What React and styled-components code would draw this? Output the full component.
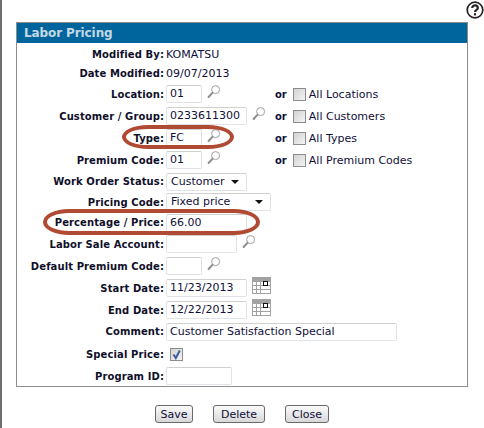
import React from 'react'
import styled, { createGlobalStyle } from 'styled-components'

const GlobalStyle = createGlobalStyle`
  html, body {
    margin: 0;
    padding: 0;
    background: #fff;
  }
`
const Page = styled.div`
  position: relative;
  width: 484px;
  height: 428px;
  box-sizing: border-box;
  border-left: 2px solid #6e6e6e;
  padding: 22px 0 0 14px;
  overflow: hidden;
  font-family: 'DejaVu Sans', Verdana, sans-serif;
  font-size: 11px;
  color: #10103a;
`
const HelpButton = styled.svg`
  position: absolute;
  left: 464px;
  top: 1px;
`
const Panel = styled.div`
  width: 452px;
  height: 365px;
  box-sizing: border-box;
  border: 1px solid #8c8c8c;
`
const Header = styled.div`
  height: 20px;
  background: #00659c;
  color: #c4d8e6;
  font-size: 12px;
  font-weight: bold;
  letter-spacing: -0.1px;
  line-height: 20px;
  padding-left: 7px;
`
const Rows = styled.div`
  padding-top: 1px;
`
const Row = styled.div`
  display: grid;
  grid-template-columns: 147px 111px auto;
  align-items: center;
  height: ${props => props.$height}px;
`
const Label = styled.div`
  font-size: 10px;
  font-weight: bold;
  letter-spacing: 0.1px;
  text-align: right;
  color: #10102a;
  white-space: nowrap;
`
const Field = styled.div`
  display: flex;
  align-items: center;
  gap: 5px;
  padding-left: 2px;
  white-space: nowrap;
`
const Input = styled.div`
  box-sizing: border-box;
  flex: none;
  width: ${props => props.$width}px;
  height: 18px;
  line-height: 16px;
  padding-left: 3px;
  background: #fff;
  border: 1px solid #dfe3e8;
  border-top-color: #d0d0d0;
  border-radius: 2px;
  overflow: hidden;
`
const Select = styled(Input)`
  display: flex;
  align-items: center;
  justify-content: space-between;
  padding: 0 7px 0 4px;
`
const Caret = styled.span`
  width: 0;
  height: 0;
  border-left: 4px solid transparent;
  border-right: 4px solid transparent;
  border-top: 4px solid #111;
`
const OrPart = styled.div`
  display: flex;
  align-items: center;
  white-space: nowrap;
`
const Or = styled.span`
  font-size: 10px;
  font-weight: bold;
  margin-right: 6px;
`
const Check = styled.span`
  box-sizing: border-box;
  display: flex;
  align-items: center;
  justify-content: center;
  width: 13px;
  height: 13px;
  flex: none;
  margin-right: ${props => props.$margin || 0}px;
  margin-left: ${props => props.$left || 0}px;
  border: 1px solid #8d8d8d;
  background: linear-gradient(135deg, #d2d2d2, #f4f4f4);
`
const Buttons = styled.div`
  display: flex;
  gap: 20px;
  margin: 18px 0 0 139px;
`
const Button = styled.button`
  box-sizing: border-box;
  width: ${props => props.$width}px;
  height: 18px;
  padding: 0;
  font-family: inherit;
  font-size: 11px;
  color: #10103a;
  background: linear-gradient(#fafafa, #d8d8d8);
  border: 1px solid #6a6a6a;
  border-radius: 3px;
`
const Oval = styled.div`
  position: absolute;
  box-sizing: border-box;
  left: ${props => props.$left}px;
  top: ${props => props.$top}px;
  width: ${props => props.$width}px;
  height: ${props => props.$height}px;
  border: 4px solid #b04a33;
  border-radius: 26px / 50%;
`
const SearchSvg = styled.svg`
  margin-bottom: 4px;
`
const CalendarSvg = styled.svg`
  margin-bottom: 5px;
`

const SearchIcon = () => (
  <SearchSvg width="14" height="14" viewBox="0 0 14 14">
    <circle cx="8.6" cy="4.6" r="4" fill="#fff" stroke="#a0a0a0" />
    <path d="M5.4 7.8 L1.6 12" stroke="#8e8e8e" strokeWidth="2" strokeLinecap="round" />
  </SearchSvg>
)

const CAL_COLS = [1, 5, 9, 12, 15]
const CAL_ROWS = [5, 9, 13]

const CalendarIcon = () => (
  <CalendarSvg width="19" height="17" viewBox="0 0 19 17">
    <rect width="19" height="17" fill="#a2a2a2" />
    {CAL_ROWS.map(y =>
      CAL_COLS.map(x => <rect key={`${x}-${y}`} x={x} y={y} width="3" height="3" fill="#fff" />)
    )}
    <rect x="11.5" y="4.5" width="4" height="4" fill="#fff" stroke="#111" />
  </CalendarSvg>
)

const CheckMark = () => (
  <svg width="11" height="11" viewBox="0 0 11 11">
    <path d="M2.5 5.5 L4.8 9 L8.8 1.5" stroke="#3d5a9e" strokeWidth="2" fill="none" />
  </svg>
)

const OrAll = ({ text }) => (
  <OrPart>
    <Or>or</Or>
    <Check $margin={3} />
    {text}
  </OrPart>
)

const App = () => (
  <Page>
    <GlobalStyle />
    <HelpButton width="18" height="18" viewBox="0 0 18 18">
      <circle cx="9" cy="9" r="7.8" fill="#fff" stroke="#222" strokeWidth="1.7" />
      <path d="M6.2 7 C6.2 3.6 11.8 3.6 11.8 7 C11.8 9 9 8.8 9 11" fill="none" stroke="#222" strokeWidth="2.2" />
      <rect x="7.9" y="12.2" width="2.2" height="2.2" fill="#222" />
    </HelpButton>
    <Panel>
      <Header>Labor Pricing</Header>
      <Rows>
        <Row $height={20}>
          <Label>Modified By:</Label>
          <Field>KOMATSU</Field>
        </Row>
        <Row $height={19}>
          <Label>Date Modified:</Label>
          <Field>09/07/2013</Field>
        </Row>
        <Row $height={22}>
          <Label>Location:</Label>
          <Field><Input $width={36}>01</Input><SearchIcon /></Field>
          <OrAll text="All Locations" />
        </Row>
        <Row $height={22}>
          <Label>Customer / Group:</Label>
          <Field><Input $width={81}>0233611300</Input><SearchIcon /></Field>
          <OrAll text="All Customers" />
        </Row>
        <Row $height={22}>
          <Label>Type:</Label>
          <Field><Input $width={36}>FC</Input><SearchIcon /></Field>
          <OrAll text="All Types" />
        </Row>
        <Row $height={22}>
          <Label>Premium Code:</Label>
          <Field><Input $width={36}>01</Input><SearchIcon /></Field>
          <OrAll text="All Premium Codes" />
        </Row>
        <Row $height={21}>
          <Label>Work Order Status:</Label>
          <Field><Select $width={81}>Customer<Caret /></Select></Field>
        </Row>
        <Row $height={20}>
          <Label>Pricing Code:</Label>
          <Field><Select $width={105}>Fixed price<Caret /></Select></Field>
        </Row>
        <Row $height={21}>
          <Label>Percentage / Price:</Label>
          <Field><Input $width={81}>66.00</Input></Field>
        </Row>
        <Row $height={22}>
          <Label>Labor Sale Account:</Label>
          <Field><Input $width={71} /><SearchIcon /></Field>
        </Row>
        <Row $height={22}>
          <Label>Default Premium Code:</Label>
          <Field><Input $width={36} /><SearchIcon /></Field>
        </Row>
        <Row $height={22}>
          <Label>Start Date:</Label>
          <Field><Input $width={81}>11/23/2013</Input><CalendarIcon /></Field>
        </Row>
        <Row $height={21}>
          <Label>End Date:</Label>
          <Field><Input $width={81}>12/22/2013</Input><CalendarIcon /></Field>
        </Row>
        <Row $height={23}>
          <Label>Comment:</Label>
          <Field><Input $width={231}>Customer Satisfaction Special</Input></Field>
        </Row>
        <Row $height={22}>
          <Label>Special Price:</Label>
          <Field><Check $left={4}><CheckMark /></Check></Field>
        </Row>
        <Row $height={22}>
          <Label>Program ID:</Label>
          <Field><Input $width={66} /></Field>
        </Row>
      </Rows>
    </Panel>
    <Buttons>
      <Button $width={38}>Save</Button>
      <Button $width={52}>Delete</Button>
      <Button $width={44}>Close</Button>
    </Buttons>
    <Oval $left={120} $top={125} $width={112} $height={24} />
    <Oval $left={41} $top={209} $width={217} $height={26} />
  </Page>
)

export default App
